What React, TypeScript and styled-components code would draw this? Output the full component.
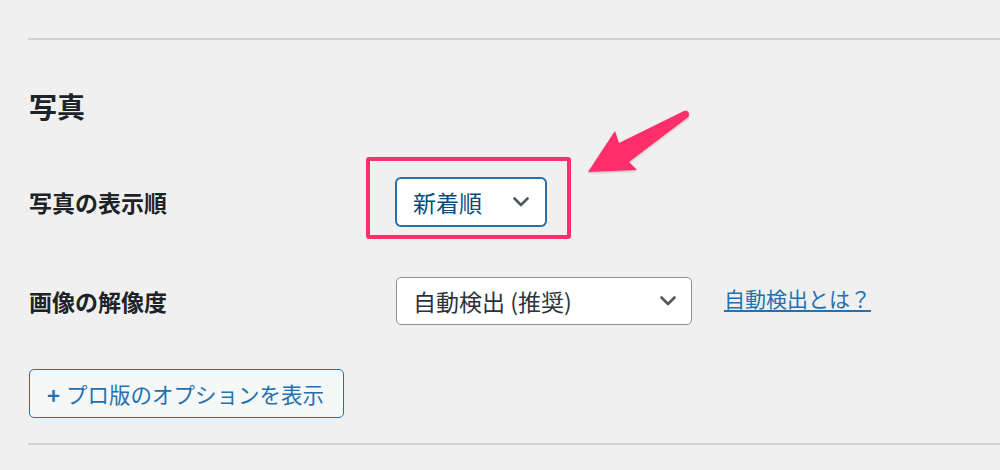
import React from "react";
import styled, { createGlobalStyle } from "styled-components";

const Global = createGlobalStyle`
  html, body { margin: 0; padding: 0; background: #f0f0f1; }
  body { font-family: "Noto Sans CJK JP", "Noto Sans", sans-serif; color: #1d2327; }
`;

const Page = styled.div`
  position: relative;
  width: 1000px;
  height: 470px;
  overflow: hidden;
  padding: 38px 0 0 28px;
  box-sizing: border-box;
`;

const Divider = styled.div`
  height: 2px;
  background: #d2d2d4;
`;

const Heading = styled.h2`
  margin: 46px 0 0 1px;
  font-size: 28px;
  line-height: 40px;
  font-weight: 700;
  color: #1d2327;
`;

const Form = styled.div`
  display: grid;
  grid-template-columns: 367px 1fr;
  row-gap: 51px;
  margin-top: 52px;
  margin-left: 1px;
  align-items: center;
`;

const Label = styled.div`
  font-size: 23px;
  font-weight: 700;
  line-height: 32px;
  color: #1d2327;
`;

const Field = styled.div`
  display: flex;
  align-items: center;
  gap: 32px;
`;

const Highlight = styled.div`
  position: relative;
  display: inline-flex;
`;

const Frame = styled.div`
  position: absolute;
  left: -30px;
  top: -21px;
  right: -25px;
  bottom: -13px;
  border: 4px solid #fe2f6b;
  border-radius: 3px;
  pointer-events: none;
`;

const SelectBox = styled.div<{ $focus?: boolean; $width: number }>`
  position: relative;
  box-sizing: border-box;
  width: ${(p) => p.$width}px;
  height: 48px;
  padding: 0 0 0 16px;
  display: flex;
  align-items: center;
  background: #fff;
  border-radius: 5px;
  border: 1px solid ${(p) => (p.$focus ? "#2271b1" : "#8c8f94")};
  box-shadow: ${(p) => (p.$focus ? "0 0 0 1px #2271b1" : "none")};
  color: ${(p) => (p.$focus ? "#0a4b78" : "#2c3338")};
  font-size: 23px;
  line-height: 32px;
`;

const Chevron = styled.svg<{ $right: number }>`
  position: absolute;
  right: ${(p) => p.$right}px;
  top: 50%;
  margin-top: -5px;
  width: 16px;
  height: 10px;
`;

const HelpLink = styled.a`
  font-size: 21px;
  line-height: 30px;
  color: #2271b1;
  text-decoration: underline;
  text-underline-offset: 3px;
  margin-top: -6px;
`;

const ProButton = styled.button`
  margin-top: 44px;
  margin-left: 1px;
  box-sizing: border-box;
  width: 315px;
  height: 49px;
  padding: 0 0 0 17px;
  display: flex;
  align-items: center;
  gap: 6px;
  background: #f6f7f7;
  border: 1px solid #2271b1;
  border-radius: 5px;
  color: #2271b1;
  font-family: "Noto Sans CJK JP", "Noto Sans", sans-serif;
  font-size: 21.5px;
  line-height: 30px;
  cursor: pointer;
`;

const Plus = styled.span`
  font-weight: 700;
  font-size: 22px;
`;

const BottomDivider = styled(Divider)`
  margin-top: 25px;
`;

const Arrow = styled.svg`
  position: absolute;
  left: 580px;
  top: 104px;
  width: 116px;
  height: 76px;
  overflow: visible;
`;

const ChevronIcon = ({ right }: { right: number }) => (
  <Chevron $right={right} viewBox="0 0 16 10">
    <path d="M1.5 1.5 L8 8 L14.5 1.5" fill="none" stroke="#50575e" strokeWidth="2.6" strokeLinecap="round" strokeLinejoin="round" />
  </Chevron>
);

export default function App() {
  return (
    <>
      <Global />
      <Page>
        <Divider />
        <Heading>写真</Heading>
        <Form>
          <Label>写真の表示順</Label>
          <Field>
            <Highlight>
              <SelectBox $focus $width={150}>
                新着順
                <ChevronIcon right={16} />
              </SelectBox>
              <Frame />
            </Highlight>
          </Field>
          <Label>画像の解像度</Label>
          <Field>
            <SelectBox $width={296}>
              自動検出 (推奨)
              <ChevronIcon right={15} />
            </SelectBox>
            <HelpLink href="#">自動検出とは？</HelpLink>
          </Field>
        </Form>
        <ProButton>
          <Plus>+</Plus>
          プロ版のオプションを表示
        </ProButton>
        <BottomDivider />
        <Arrow viewBox="580 104 116 76">
          <defs>
            <filter id="sh" x="-20%" y="-20%" width="140%" height="140%">
              <feDropShadow dx="0" dy="1" stdDeviation="1" floodColor="#000" floodOpacity="0.25" />
            </filter>
          </defs>
          <path
            d="M588 172 L615 131 L619 143 L684 111 Q689 110 689 115 Q689 117 687 118 L629 162 L637 170 Z"
            fill="#fe2f6b"
            filter="url(#sh)"
          />
        </Arrow>
      </Page>
    </>
  );
}
